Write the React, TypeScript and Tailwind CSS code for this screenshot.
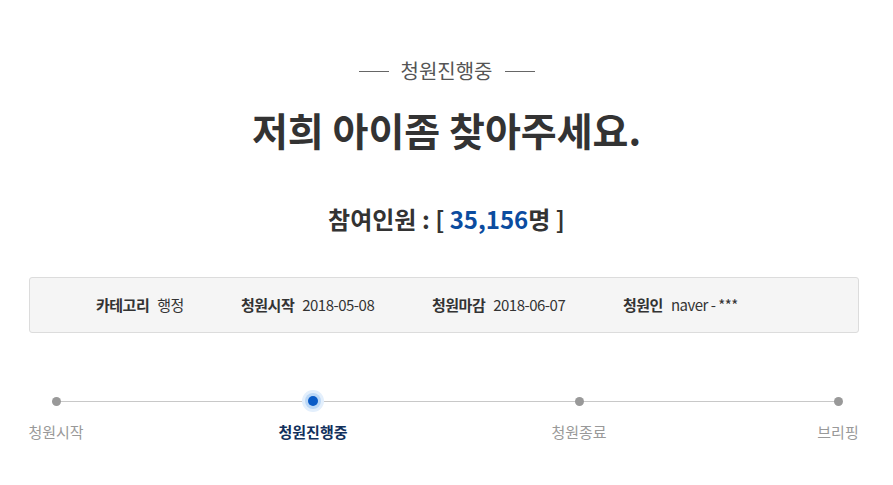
import React from "react";

const font = { fontFamily: '"Noto Sans CJK KR", "Noto Sans", sans-serif' };

function Step({ label, active, w, ml }: { label: string; active?: boolean; w: string; ml: string }) {
  return (
    <div className={`flex flex-col items-center shrink-0 ${w} ${ml}`}>
      <div className="h-[22px] flex items-center justify-center">
        {active ? (
          <div className="w-[22px] h-[22px] rounded-full bg-[#e3effc] flex items-center justify-center">
            <div className="w-[16px] h-[16px] rounded-full bg-[#bcd8f6] flex items-center justify-center">
              <div className="w-[10px] h-[10px] rounded-full bg-[#0a5bc6]" />
            </div>
          </div>
        ) : (
          <div className="w-[9px] h-[9px] rounded-full bg-[#999999]" />
        )}
      </div>
      <div
        className={`mt-[10px] text-[15px] leading-[20px] whitespace-nowrap ${
          active ? "font-bold text-[#12305c]" : "text-[#999999]"
        }`}
      >
        {label}
      </div>
    </div>
  );
}

export default function App() {
  return (
    <div className="w-[893px] h-[485px] bg-white text-[#333333]" style={font}>
      <div className="pt-[57px] flex items-center justify-center">
        <div className="w-[30px] h-px bg-[#666666]" />
        <div className="mx-[12px] text-[20px] leading-[28px] text-[#555555]">청원진행중</div>
        <div className="w-[30px] h-px bg-[#666666]" />
      </div>
      <h1 className="mt-[18px] text-center text-[39px] leading-[52px] font-bold text-[#333333]">
        저희 아이좀 찾아주세요.
      </h1>
      <div className="mt-[48px] text-center text-[24px] leading-[32px] font-bold text-[#333333]">
        참여인원 : [ <span className="text-[#0b4c9f]">35,156</span>명 ]
      </div>
      <div className="ml-[29px] mr-[34px] mt-[42px] h-[56px] bg-[#f5f5f5] border border-[#dcdcdc] rounded-[3px] flex items-center pl-[66px] text-[15px] tracking-[-0.5px]">
        <div className="w-[145px] flex items-center gap-[8px]">
          <span className="font-bold">카테고리</span>
          <span>행정</span>
        </div>
        <div className="w-[191px] flex items-center gap-[8px]">
          <span className="font-bold">청원시작</span>
          <span>2018-05-08</span>
        </div>
        <div className="w-[191px] flex items-center gap-[8px]">
          <span className="font-bold">청원마감</span>
          <span>2018-06-07</span>
        </div>
        <div className="flex items-center gap-[8px]">
          <span className="font-bold">청원인</span>
          <span>naver - ***</span>
        </div>
      </div>
      <div className="relative mt-[57px] mx-[28px] flex">
        <div className="absolute left-[28px] right-[26px] top-[11px] h-px bg-[#c8c8c8]" />
        <div className="relative flex">
          <Step label="청원시작" w="w-[56px]" ml="ml-0" />
          <Step label="청원진행중" active w="w-[80px]" ml="ml-[189px]" />
          <Step label="청원종료" w="w-[80px]" ml="ml-[186px]" />
          <Step label="브리핑" w="w-[44px]" ml="ml-[197px]" />
        </div>
      </div>
    </div>
  );
}
